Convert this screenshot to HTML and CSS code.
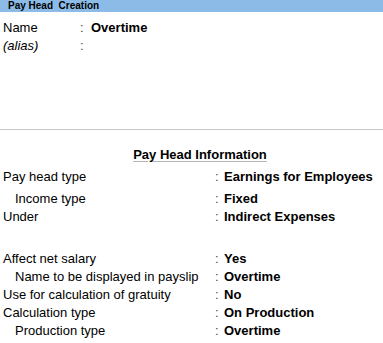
FILE: index.html
```html
<!DOCTYPE html>
<html>
<head>
<meta charset="utf-8">
<link rel="stylesheet" href="styles.css">
</head>
<body>
<div class="titlebar">Pay Head&nbsp; Creation</div>
<div class="top">
  <div class="row top-row"><span class="label">Name</span><span class="colon">:</span><span class="value">Overtime</span></div>
  <div class="row top-row"><span class="label alias">(alias)</span><span class="colon">:</span><span class="value"></span></div>
</div>
<div class="sep"></div>
<div class="heading"><span>Pay Head Information</span></div>
<div class="info">
  <div class="row info-row first"><span class="label">Pay head type</span><span class="colon">:</span><span class="value">Earnings for Employees</span></div>
  <div class="row info-row gap-before"><span class="label sub">Income type</span><span class="colon">:</span><span class="value">Fixed</span></div>
  <div class="row info-row"><span class="label">Under</span><span class="colon">:</span><span class="value">Indirect Expenses</span></div>
  <div class="row info-row big-gap"><span class="label">Affect net salary</span><span class="colon">:</span><span class="value">Yes</span></div>
  <div class="row info-row"><span class="label sub">Name to be displayed in payslip</span><span class="colon">:</span><span class="value">Overtime</span></div>
  <div class="row info-row"><span class="label">Use for calculation of gratuity</span><span class="colon">:</span><span class="value">No</span></div>
  <div class="row info-row"><span class="label">Calculation type</span><span class="colon">:</span><span class="value">On Production</span></div>
  <div class="row info-row"><span class="label sub">Production type</span><span class="colon">:</span><span class="value">Overtime</span></div>
</div>
</body>
</html>
```
FILE: styles.css
```css
html, body {
  margin: 0;
  padding: 0;
  background: #ffffff;
}
body {
  font-family: "Liberation Sans", Arial, sans-serif;
  font-size: 13px;
  color: #000;
  width: 383px;
  height: 343px;
  overflow: hidden;
}
.titlebar {
  height: 12px;
  line-height: 12px;
  background: #8cbbe8;
  font-size: 10px;
  font-weight: bold;
  padding-left: 8px;
  color: #000;
  white-space: pre;
}
.top {
  margin-top: 7px;
}
.row {
  display: grid;
  height: 18px;
  line-height: 18px;
  padding-left: 3px;
  white-space: nowrap;
}
.top-row {
  grid-template-columns: 77px 11px 1fr;
}
.info-row {
  grid-template-columns: 212px 9px 1fr;
}
.label.sub {
  padding-left: 12px;
}
.alias {
  font-style: italic;
}
.colon {
  color: #444;
}
.value {
  font-weight: bold;
}
.sep {
  margin-top: 74px;
  height: 1px;
  background: #c8c8c8;
}
.heading {
  margin-top: 16px;
  height: 18px;
  line-height: 18px;
  text-align: center;
  padding-left: 17px;
  font-weight: bold;
}
.heading span {
  text-decoration: underline;
  text-decoration-color: #b4b4b4;
  text-underline-offset: 2px;
}
.info .first {
  margin-top: 4px;
}
.info .gap-before {
  margin-top: 4px;
}
.info .big-gap {
  margin-top: 24px;
}
```
